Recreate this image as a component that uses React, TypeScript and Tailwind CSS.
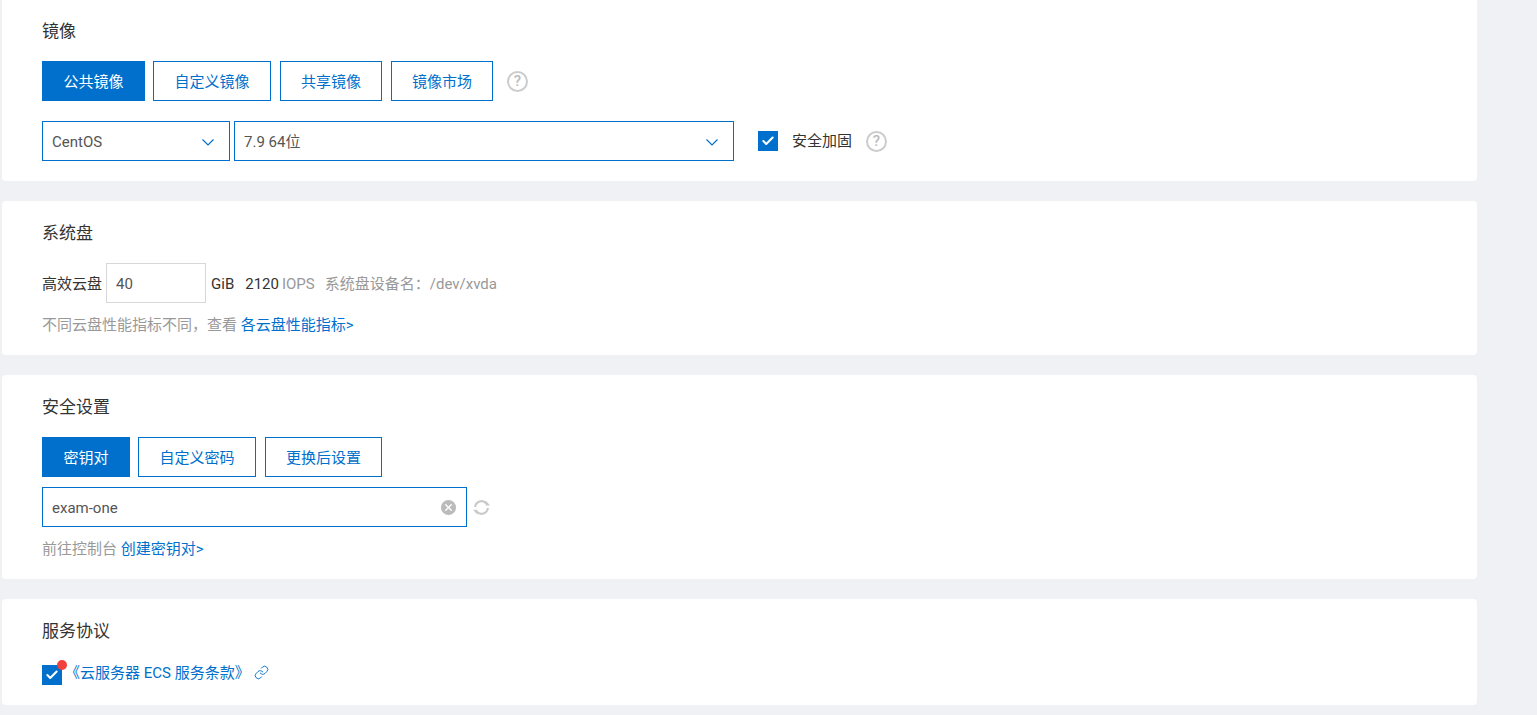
import type { FC, ReactNode } from "react";
import { Check, Link, X } from "lucide-react";

const font = "font-['Roboto','Noto_Sans_CJK_SC',sans-serif]";

const Title: FC<{ children: ReactNode }> = ({ children }) => (
  <div className="h-[22px] text-[17px] leading-[22px] text-[#333]">{children}</div>
);

const TabButton: FC<{ active?: boolean; className: string; children: ReactNode }> = ({
  active,
  className,
  children,
}) => (
  <button
    type="button"
    className={
      (active ? "bg-[#0070cc] text-white " : "bg-white text-[#0070cc] ") +
      "h-10 border border-[#0070cc] pt-0.5 text-[15px] " +
      className
    }
  >
    {children}
  </button>
);

const Help: FC = () => (
  <div className="flex h-[21px] w-[21px] items-center justify-center rounded-full border-2 border-[#ccc] text-[15px] font-medium leading-none text-[#bbb]">
    ?
  </div>
);

const Chevron: FC = () => (
  <svg width="12" height="7" viewBox="0 0 12 7" fill="none" stroke="#0070cc" strokeWidth="1.2">
    <path d="M.5.5l5.5 5.5 5.500-5.500" />
  </svg>
);

const Select: FC<{ value: string; className: string }> = ({ value, className }) => (
  <div
    className={
      "flex h-10 items-center justify-between border border-[#0070cc] pl-[9px] pr-[15px] pt-0.5 text-[15px] text-[#555] " +
      className
    }
  >
    <span>{value}</span>
    <Chevron />
  </div>
);

const CheckBox: FC = () => (
  <div className="flex h-5 w-5 items-center justify-center bg-[#0070cc]">
    <Check className="h-3.5 w-3.5 text-white" strokeWidth={3.5} />
  </div>
);

const Refresh: FC = () => (
  <svg className="ml-1.5" width="17" height="17" viewBox="0 0 16 16" fill="none" stroke="#c8c9ca" strokeWidth="2">
    <path d="M2 7.500A6 6 0 0 1 12.600 4.200" />
    <path d="M14 8.500A6 6 0 0 1 3.400 11.800" />
    <path d="M12 1.500v4.500H16" fill="#c8c9ca" stroke="none" />
    <path d="M4 14.500v-4.500H0" fill="#c8c9ca" stroke="none" />
  </svg>
);

export default function App() {
  return (
    <div className={"h-[715px] overflow-hidden bg-[#f0f1f5] pl-0.5 " + font}>
      <div className="flex w-[1475px] flex-col gap-5">
        <section className="h-[181px] rounded-b-sm bg-white pl-10 pt-5">
          <Title>镜像</Title>
          <div className="mt-[19px] flex items-center">
            <TabButton active className="w-[103px]">公共镜像</TabButton>
            <TabButton className="ml-2 w-[118px]">自定义镜像</TabButton>
            <TabButton className="ml-[9px] w-[102px]">共享镜像</TabButton>
            <TabButton className="ml-[9px] w-[102px]">镜像市场</TabButton>
            <div className="ml-3.5">
              <Help />
            </div>
          </div>
          <div className="mt-5 flex items-center">
            <Select value="CentOS" className="w-[188px]" />
            <Select value="7.9 64位" className="ml-1 w-[500px]" />
            <div className="ml-6">
              <CheckBox />
            </div>
            <span className="ml-3.5 text-[15px] text-[#333]">安全加固</span>
            <div className="ml-3.5">
              <Help />
            </div>
          </div>
        </section>

        <section className="h-[154px] rounded-sm bg-white pl-10 pt-[21px]">
          <Title>系统盘</Title>
          <div className="mt-[19px] flex items-center text-[15px]">
            <span className="pt-0.5 text-[#333]">高效云盘</span>
            <div className="ml-1 flex h-10 w-[100px] items-center border border-[#d7d8d9] pl-[9px] pt-0.5 text-[#555]">
              40
            </div>
            <span className="ml-[5px] pt-0.5 text-[#333]">GiB</span>
            <span className="ml-[11px] pt-0.5 text-[#333]">2120</span>
            <span className="ml-[3px] pt-0.5 text-[#999]">IOPS</span>
            <span className="ml-2.5 pt-0.5 text-[#999]">系统盘设备名：/dev/xvda</span>
          </div>
          <div className="mt-3 text-[15px] leading-5 text-[#999]">
            不同云盘性能指标不同，查看 <a className="text-[#0070cc]">各云盘性能指标&gt;</a>
          </div>
        </section>

        <section className="h-[204px] rounded-sm bg-white pl-10 pt-[21px]">
          <Title>安全设置</Title>
          <div className="mt-[19px] flex items-center">
            <TabButton active className="w-[88px]">密钥对</TabButton>
            <TabButton className="ml-2 w-[118px]">自定义密码</TabButton>
            <TabButton className="ml-[9px] w-[117px]">更换后设置</TabButton>
          </div>
          <div className="mt-2.5 flex items-center">
            <div className="flex h-10 w-[425px] items-center justify-between border border-[#0070cc] pl-[9px] pr-[10px] pt-0.5 text-[15px] text-[#555]">
              <span>exam-one</span>
              <div className="mb-0.5 flex h-[15px] w-[15px] items-center justify-center rounded-full bg-[#bbb]">
                <X className="h-[11px] w-[11px] text-white" strokeWidth={3} />
              </div>
            </div>
            <Refresh />
          </div>
          <div className="mt-3 text-[15px] leading-5 text-[#999]">
            前往控制台 <a className="text-[#0070cc]">创建密钥对&gt;</a>
          </div>
        </section>

        <section className="h-[106px] rounded-sm bg-white pl-10 pt-[21px]">
          <Title>服务协议</Title>
          <div className="mt-5 flex items-center">
            <div className="relative">
              <CheckBox />
              <span className="absolute -right-[5px] -top-[5px] h-2.5 w-2.5 rounded-full bg-[#f0413c]" />
            </div>
            <a className="mb-1 ml-[3px] text-[15px] text-[#0070cc]">《云服务器 ECS 服务条款》</a>
            <Link className="mb-1.5 ml-1 h-[15px] w-[15px] text-[#0070cc]" strokeWidth={1.5} />
          </div>
        </section>
      </div>
    </div>
  );
}
